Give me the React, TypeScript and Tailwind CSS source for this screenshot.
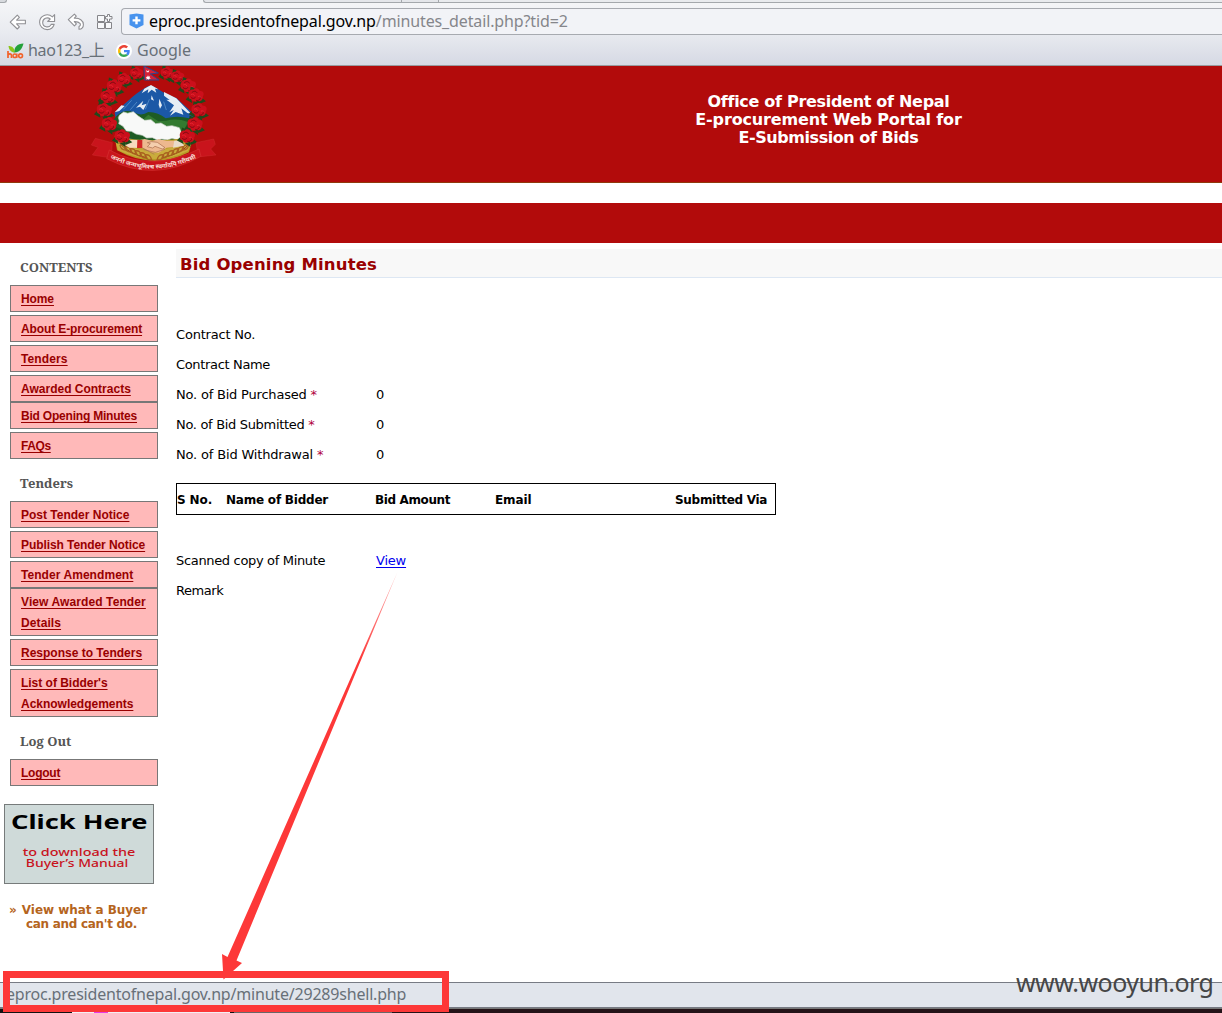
import React from "react";

const VERDANA = "font-['DejaVu_Sans',sans-serif]";
const UI = "font-['Noto_Sans','Noto_Sans_CJK_SC',sans-serif]";

type Entry = { label: string; spacing?: string; tight?: boolean };

const contents: Entry[] = [
  { label: "Home", spacing: "tracking-[-0.1px]" },
  { label: "About E-procurement", spacing: "tracking-[-0.12px]" },
  { label: "Tenders", spacing: "tracking-[0.12px]" },
  { label: "Awarded Contracts" },
  { label: "Bid Opening Minutes", tight: true, spacing: "tracking-[-0.21px]" },
  { label: "FAQs", spacing: "tracking-[-0.4px]" },
];
const tenders: Entry[] = [
  { label: "Post Tender Notice" },
  { label: "Publish Tender Notice", spacing: "tracking-[-0.08px]" },
  { label: "Tender Amendment", spacing: "tracking-[0.06px]" },
  { label: "View Awarded Tender Details", tight: true, spacing: "tracking-[0.1px]" },
  { label: "Response to Tenders" },
  { label: "List of Bidder's Acknowledgements", spacing: "tracking-[-0.02px]" },
];
const logout: Entry[] = [{ label: "Logout", spacing: "tracking-[-0.25px]" }];

function BackIcon() {
  return (
    <svg className="h-[18px] w-[18px]" viewBox="0 0 18 18">
      <path d="M1.2 9.2 8.3 2.2 10.4 4.3 7.6 7.2H16.4V10.8H7.6L10.4 13.8 8.3 16Z" fill="#fff" stroke="#909094" strokeWidth="1.1" strokeLinejoin="round" />
    </svg>
  );
}

function ReloadIcon() {
  return (
    <svg className="h-[18px] w-[18px]" viewBox="0 0 18 18">
      <path d="M16.600 1.600V8.500H9.700L12.200 6C9.500 3.700 4.700 5.300 4.700 9.400c0 4.700 6.200 6.200 8.500 2h3c-1 3.300-3.800 5.200-7 5.200-4.300 0-7.600-3.300-7.600-7.400C1.600 2.700 9.400-.5 14.400 3.800Z" fill="#fff" stroke="#909094" strokeWidth="1.1" strokeLinejoin="round" />
    </svg>
  );
}

function UndoIcon() {
  return (
    <svg className="h-[18px] w-[18px]" viewBox="0 0 18 18">
      <path d="M1.300 6.700 7.400 1.200 9.300 3.100 7.300 5.200C12.500 4.700 16.400 7.600 16.400 11.500c0 2.600-1.700 4.600-4.400 4.800v-2.800c3-1.600 1.100-5.100-4.700-4.900l2.100 2.200-2 2Z" fill="#fff" stroke="#909094" strokeWidth="1.100" strokeLinejoin="round" />
    </svg>
  );
}

function AppsIcon() {
  return (
    <svg className="h-[18px] w-[18px]" viewBox="0 0 18 18">
      <g fill="#f7f8fa" stroke="#858589" strokeWidth="1">
        <path d="M1.500 2.500h7v6h-7zM1.500 9.500h7v6h-7zM9.500 9.500h6v6h-6z" />
        <path d="M11.500 1.500h2v2h2.500v2.500h-2.500v2.500H11.500v-2.500H9.500V3.500h2Z" />
      </g>
    </svg>
  );
}

function BrowserChrome() {
  return (
    <header className={`h-[66px] border-b border-[#999b9f] bg-linear-to-b from-[#f5f6f8] via-[#e9ebf0] to-[#d6d9e4] ${UI}`}>
      <div className="flex h-[3px]">
        <div className="w-[7px] rounded-br border-r border-b border-[#a4a8ac] bg-[#d7dade]" />
        <div className="w-[196px]" />
        <div className="w-[198px] rounded-bl border-b border-l border-[#a4a8ac] bg-[#e4e6ea]" />
        <div className="w-[38px] border-x border-b border-[#a4a8ac] bg-[#e4e6ea]" />
        <div className="flex-1 border-b border-[#a4a8ac] bg-[#e9ebee]" />
      </div>
      <div className="flex h-[37px] items-center">
        <div className="flex w-[121px] gap-[11px] pl-[9px]">
          <BackIcon />
          <ReloadIcon />
          <UndoIcon />
          <AppsIcon />
        </div>
        <div className="mt-[-1px] flex h-[27px] flex-1 items-center rounded-l-[4px] border-y border-l border-[#a7aab0] bg-[#f2f3f7] pl-[7px]">
          <svg className="h-[16px] w-[15px]" viewBox="0 0 15 16">
            <path d="M.5 1.500 7.500.5l7 1V12L7.500 15.500.5 12Z" fill="#4893ee" />
            <path d="M6.300 3.500h2.400v2.700h2.700v2.300H8.700v2.700H6.300V8.500H3.600V6.200h2.700Z" fill="#fff" />
          </svg>
          <span className="ml-[5px] text-[16px] leading-[24px] whitespace-pre text-black">
            <span className="tracking-[-0.120px]">eproc.presidentofnepal.gov.np</span>
            <span className="tracking-[-0.130px] text-[#85868b]">/minutes_detail.php?tid=2</span>
          </span>
        </div>
      </div>
      <div className="mt-[-1px] flex h-[22px] items-center text-[16px] leading-[22px] text-[#687078]">
        <svg className="mt-[2px] ml-[7px] h-[16px] w-[17px]" viewBox="0 0 17 16">
          <path d="M1.500 3C5 3 7.500 5 8 9.500 4 9.500 2 7 1.500 3Z" fill="#8bc51c" />
          <path d="M16.500.5C10 1 7 4 7.500 9.500 12.500 9 15 6 16.500.5Z" fill="#24a13a" />
          <path d="M1 8v7M1 12c1-1.500 3.500-1.500 3.500.5V15" fill="none" stroke="#f2622a" strokeWidth="1.700" />
          <circle cx="7.800" cy="12.800" r="1.800" fill="none" stroke="#f2622a" strokeWidth="1.500" />
          <path d="M9.900 10.500v4.500" stroke="#f2622a" strokeWidth="1.300" />
          <circle cx="13.600" cy="12.800" r="1.900" fill="none" stroke="#f2622a" strokeWidth="1.600" />
        </svg>
        <span className="ml-[4px] w-[76px] tracking-[-0.350px] whitespace-nowrap">hao123_上</span>
        <span className="mt-[1px] ml-[12px] flex h-[16px] w-[16px] items-center justify-center rounded-full bg-white">
          <svg className="h-[12px] w-[12px]" viewBox="0 0 48 48">
            <path fill="#EA4335" d="M24 9.500c3.540 0 6.710 1.220 9.210 3.600l6.850-6.850C35.900 2.380 30.470 0 24 0 14.620 0 6.510 5.380 2.560 13.220l7.980 6.190C12.430 13.720 17.740 9.500 24 9.500z" />
            <path fill="#4285F4" d="M46.980 24.550c0-1.570-.15-3.090-.38-4.550H24v9.020h12.940c-.58 2.960-2.260 5.480-4.780 7.180l7.730 6c4.510-4.180 7.090-10.360 7.090-17.650z" />
            <path fill="#FBBC05" d="M10.530 28.590c-.48-1.450-.76-2.990-.76-4.590s.27-3.140.76-4.590l-7.980-6.190C.92 16.460 0 20.120 0 24s.92 7.540 2.560 10.780z" />
            <path fill="#34A853" d="M24 48c6.480 0 11.930-2.130 15.890-5.810l-7.730-6c-2.150 1.450-4.920 2.300-8.160 2.300-6.260 0-11.570-4.220-13.470-9.910l-7.980 6.190C6.510 42.620 14.620 48 24 48z" />
          </svg>
        </span>
        <span className="ml-[5px]">Google</span>
      </div>
    </header>
  );
}

const flowers: [number, number][] = [
  [170, 33], [132, 50], [103, 72], [84, 103], [73, 143], [88, 185],
  [262, 32], [293, 43], [325, 70], [348, 99], [357, 143], [345, 186],
  [127, 222], [322, 222],
];

function Flower({ x, y }: { x: number; y: number }) {
  return (
    <g transform={`translate(${x} ${y}) scale(${y < 60 ? 1 : 1.15})`}>
      <path d="M-27 12l12-13 5 22zM26 16l-15-12-4 20zM-14-22l14 6-16 8zM8 29l-15-11 15-3z" fill="#1f4a1b" />
      <path d="M-19 3c-3-11 4-18 12-17 5-7 15-3 16 3 10 0 14 8 9 15 1 9-7 15-14 11-7 5-15 2-16-4-5 0-8-3-7-8Z" fill="#cb0f1b" />
      <path d="M-11-6c6-6 12-4 14 1M-14 5c5 6 11 4 13 0m1 9c6 2 13-3 11-10" fill="none" stroke="#780912" strokeWidth="2.500" />
      <path d="M-13-1c4-3 8-1 9 3M5 4c5-2 8 0 8 3" fill="none" stroke="#ea2c38" strokeWidth="2" />
    </g>
  );
}

function Emblem() {
  return (
    <svg className="h-[116px] w-[150px] shrink-0" viewBox="0 12 450 348">
      <defs>
        <path id="motto" d="M91 288Q215 353 354 286" />
      </defs>
      <path d="M104 152C130 130 160 98 196 77Q212 65 229 78L252 92 290 109 342 157 310 242 118 232Z" fill="#1b58a6" />
      <path d="M193 80 213 69 235 82 225 80 229 92 215 83 203 94 205 82 185 94ZM252 90 289 109 333 155 322 153 304 139 310 158 287 150 270 161 281 144 268 151 282 130 259 113 269 114 252 101ZM168 137 190 116 185 130 200 125 190 144 180 134ZM238 110l8 20-6 10-4-12ZM104 151 124 130 134 132 118 147ZM215 100l7 16-9-4Z" fill="#e6edf4" />
      <path d="M130 142 155 115M151 143 171 120M208 112l-12 30M251 119l8 25" stroke="#4c86c4" strokeWidth="3" />
      <path d="M101 173Q125 137 160 151Q185 164 205 150Q236 151 257 169Q292 160 328 169L342 232Q220 255 115 220Z" fill="#1e5c24" />
      <path d="M116 160Q140 140 170 160L190 172 205 158 235 178 259 176Q291 168 324 180L305 218 186 199Z" fill="#337a30" />
      <path d="M118 160l13-10 12 4 17-5 16 14 18 12 19-2 14 12 16-2 17 10 16-2 22 6 6 14 0 17-14 5-14-4-13 5-18-3-13 3-15-7-17 1-13-8-19-4-14-8-15-1-10-14-13-8 2-8-3-10Z" fill="#f8f9f8" stroke="#c7d0c5" strokeWidth="2" />
      <path d="M104 221Q208 247 340 224L327 271Q219 325 111 265Z" fill="#b59b24" />
      <path d="M104 232Q155 268 218 263Q280 264 339 233L324 267Q224 316 114 265Z" fill="#c9ac3c" />
      <path d="M118 242q23 32 84 46M331 242q-23 32-83 45" fill="none" stroke="#8e3718" strokeWidth="3" />
      {[0, 1, 2, 3, 4, 5].map((i) => (
        <g key={i} fill="none" stroke="#a9611f" strokeWidth="4">
          <path d={`M${120 + i * 15} ${249 + i * 6}q15-4 20 15q-18 1-20-15`} />
          <path d={`M${326 - i * 15} ${249 + i * 6}q-15-4-20 15q18 1 20-15`} />
        </g>
      ))}
      <path d="M147 235h29l18-4 23 5 19-4 24 4h28l-5 19-23 2-24 15-22-1-24-12-16-1-25-3Z" fill="#edb88f" />
      <path d="M202 242l13-3 17 2 23 16-8 4-22-8-7 5-16-4 9-9Z" fill="#f4cead" stroke="#a86a4a" strokeWidth="2" />
      <path d="M145 234h30v23h-27l-14-9Z" fill="#f7dbc0" />
      <path d="M172 234h15v24h-16Z" fill="#d12626" />
      <path d="M283 236l20-1 9 16-33 6Z" fill="#e9dbc9" />
      <path d="m191 263 35 8 29-9M186 257l37 20" fill="none" stroke="#a96f50" strokeWidth="2" />
      {flowers.map(([x, y]) => <Flower key={`${x}-${y}`} x={x} y={y} />)}
      <path d="M192 12 235 33 211 36 237 54H193Z" fill="#d52138" stroke="#28468e" strokeWidth="3" />
      <path d="m199 24 4 4 5-4-2 7h-6ZM204 40l2 4 4-1-1 4 4 2-5 1-1 3-4-2-4 2 1-5-3-3 5-1Z" fill="#fff" />
      <path d="M46 229 97 242 95 270 82 286 37 279 54 256 34 249Z" fill="#c9141c" stroke="#d43a3a" strokeWidth="1" />
      <path d="M401 231 348 242 352 268 363 284 408 279 392 261 406 247Z" fill="#c9141c" stroke="#d43a3a" strokeWidth="1" />
      <path d="M88 264Q215 333 357 261L363 283Q222 364 80 290Z" fill="#c9151b" stroke="#d93b3b" strokeWidth="1.500" />
      <text fill="#f7dcd4" fontSize="18" fontWeight="700" fontFamily="'Noto Sans','Noto Sans Devanagari',sans-serif">
        <textPath href="#motto" textLength="268" lengthAdjust="spacingAndGlyphs">जननी जन्मभूमिश्च स्वर्गादपि गरीयसी</textPath>
      </text>
    </svg>
  );
}

function Menu({ title, entries, className }: { title: string; entries: Entry[]; className: string }) {
  return (
    <section className={className}>
      <h2 className="h-[20px] pl-[10px] font-['Noto_Serif','DejaVu_Serif_Condensed','Liberation_Serif',serif] text-[13px] leading-[20px] font-bold text-[#555]">{title}</h2>
      <ul className="mt-[8px] flex flex-col">
        {entries.map((e) => (
          <li
            key={e.label}
            className={`border border-[#777] bg-[#ffb9b9] pt-[3px] pb-[1px] pl-[10px] font-['Liberation_Sans',sans-serif] text-[12px] leading-[21px] font-bold text-[#900] ${e.tight ? "" : "mt-[3px] first:mt-0"} ${e.spacing ?? ""}`}
          >
            <a className="underline decoration-1 underline-offset-2 [text-decoration-skip-ink:none]">{e.label}</a>
          </li>
        ))}
      </ul>
    </section>
  );
}

function Sidebar() {
  return (
    <aside className="w-[176px] shrink-0">
      <div className="w-[158px] pl-[10px]">
        <Menu title="CONTENTS" entries={contents} className="pt-[14px]" />
        <Menu title="Tenders" entries={tenders} className="pt-[14px]" />
        <Menu title="Log Out" entries={logout} className="pt-[14px]" />
      </div>
      <div className="mt-[18px] ml-[4px] h-[80px] w-[150px] border border-[#777b7b] bg-[#cfdad9] font-['Noto_Sans',sans-serif] whitespace-nowrap">
        <div className="ml-[6px] h-[38px] origin-left scale-x-[1.360] pt-[4px] text-[20px] leading-[25px] font-bold text-black">Click Here</div>
        <div className="text-center text-[11px] leading-[11px] font-medium text-[#c8141e]">
          <div className="mt-[3px] scale-x-[1.310]">to download the</div>
          <div className="ml-[-4px] scale-x-[1.270]">Buyer’s Manual</div>
        </div>
      </div>
      <p className={`mt-[19px] ml-[9px] w-[150px] pl-[17px] -indent-[17px] text-[12px] leading-[14px] font-bold tracking-[-0.05px] whitespace-nowrap text-[#b5651d] ${VERDANA}`}>
        <span className="mr-[1px]">»</span> View what a Buyer<br /><span className="tracking-[-0.300px]">can and can't do.</span>
      </p>
    </aside>
  );
}

function Row({ label, required, spacing, children }: { label: string; required?: boolean; spacing?: string; children?: React.ReactNode }) {
  return (
    <div className="flex h-[30px] items-center">
      <span className={`w-[200px] whitespace-nowrap ${spacing ?? ""}`}>
        {label}
        {required && <span className="text-[#b0003c]"> *</span>}
      </span>
      {children}
    </div>
  );
}

function Main() {
  return (
    <main className={`flex-1 pt-[6px] text-[13px] text-black ${VERDANA}`}>
      <h1 className="h-[29px] border-b border-[#dde7f3] bg-[#f8f8f8] pl-[4px] text-[16.500px] leading-[31px] font-bold tracking-[0.160px] text-[#900]">Bid Opening Minutes</h1>
      <div className="mt-[42px] tracking-[-0.200px]">
        <Row label="Contract No." />
        <Row label="Contract Name" spacing="tracking-[-0.340px]" />
        <Row label="No. of Bid Purchased" required />
        <Row label="No. of Bid Submitted" required spacing="tracking-[-0.320px]" />
        <Row label="No. of Bid Withdrawal" required spacing="tracking-[-0.170px]" />
      </div>
      <div className="mt-[-90px] ml-[200px] flex flex-col leading-[30px]">
        <span>0</span>
        <span>0</span>
        <span>0</span>
      </div>
      <div className="mt-[13px] flex h-[32px] w-[600px] items-center border border-black pt-[2px] text-[12px] font-bold tracking-[-0.300px] whitespace-nowrap">
        <span className="w-[49px] tracking-[-0.1px]">S No.</span>
        <span className="w-[149px] tracking-[-0.220px]">Name of Bidder</span>
        <span className="w-[120px] tracking-[-0.380px]">Bid Amount</span>
        <span className="w-[180px] tracking-[-0.1px]">Email</span>
        <span>Submitted Via</span>
      </div>
      <div className="mt-[31px] tracking-[-0.330px]">
        <Row label="Scanned copy of Minute">
          <a className="tracking-[-0.200px] text-[#00e] underline decoration-1 underline-offset-2">View</a>
        </Row>
        <Row label="Remark" spacing="tracking-[-0.450px]" />
      </div>
    </main>
  );
}

export default function App() {
  return (
    <div className="relative flex h-[1013px] w-[1222px] flex-col overflow-hidden bg-white">
      <BrowserChrome />
      <div className="flex h-[117px] border-b border-[#8f3a0c] bg-[#b20b0b] pl-[80px]">
        <Emblem />
        <div className={`ml-[205px] flex w-[787px] flex-col items-center pt-[27px] text-[16px] leading-[18px] font-bold text-white ${VERDANA}`}>
          <div className="tracking-[-0.300px]">Office of President of Nepal</div>
          <div className="tracking-[-0.150px]">E-procurement Web Portal for</div>
          <div className="tracking-[-0.450px]">E-Submission of Bids</div>
        </div>
      </div>
      <div className="mt-[20px] h-[40px] bg-[#b20b0b]" />
      <div className="flex h-[739px]">
        <Sidebar />
        <Main />
      </div>
      <footer className={`h-[26px] border-y border-[#777b84] bg-[#e1e5ec] pl-[6px] text-[16px] leading-[22px] tracking-[-0.200px] text-[#687078] ${UI}`}>
        eproc.presidentofnepal.gov.np/minute/29289shell.php
      </footer>
      <div className="flex h-[5px] border-t border-[#777] bg-[#241318]">
        <div className="w-[72px] bg-[#111]" />
        <div className="w-[22px] bg-[#f2eef2]" />
        <div className="w-[14px] bg-[#e83be6]" />
        <div className="w-[122px] bg-[#f2eef2]" />
        <div className="w-[4px] bg-[#111]" />
        <div className="w-[158px] bg-[#686868]" />
      </div>
      <svg className="pointer-events-none absolute top-[560px] left-[210px] h-[425px] w-[200px]" viewBox="210 560 200 425">
        <defs>
          <linearGradient id="tail" x1="0" y1="570" x2="0" y2="660" gradientUnits="userSpaceOnUse">
            <stop offset="0" stopColor="#fd3838" stopOpacity=".35" />
            <stop offset="1" stopColor="#fd3838" />
          </linearGradient>
        </defs>
        <path d="M397.500 572 236.500 960.500 242 963 223.500 979.500 222 954 227.500 957Z" fill="url(#tail)" />
      </svg>
      <div className="absolute top-[971px] left-[3px] h-[41px] w-[446px] border-x-[7px] border-y-[7px] border-[#fd3838]" />
      <div className={`absolute top-[964px] left-[1016px] text-[25px] leading-[36px] tracking-[-0.540px] whitespace-nowrap text-[#464646] ${UI}`}>www.wooyun.org</div>
    </div>
  );
}
